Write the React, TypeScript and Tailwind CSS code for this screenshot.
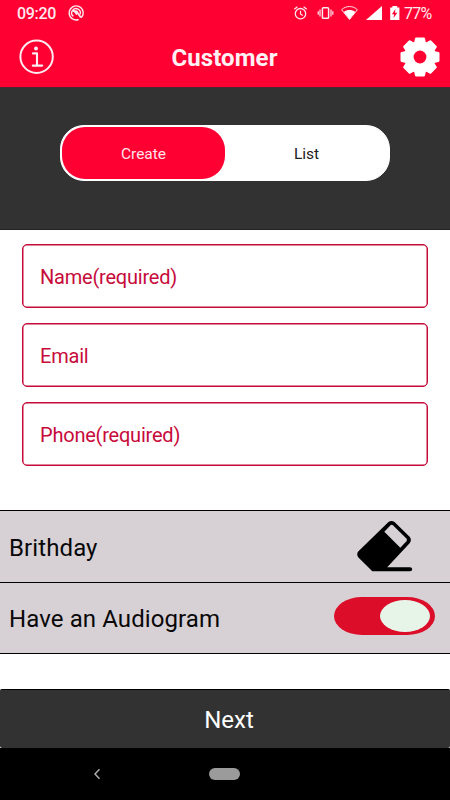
import { useState } from 'react';

const FONT = "font-['Roboto','Liberation_Sans',sans-serif]";

function StatusBar() {
  return (
    <div className="flex h-[27px] items-center text-[#ffe9ee]">
      <span className="ml-[17px] w-[51px] text-[16px] font-medium leading-none tracking-[-0.3px]">09:20</span>
      <svg className="mb-px h-4 w-4" viewBox="0 0 16 16" fill="none" stroke="currentColor">
        <path d="M13.2 12.8A7 7 0 1 0 10.6 14.5" strokeWidth="1.4" />
        <path d="M5.4 11.4A4.3 4.3 0 1 1 12 9.6" strokeWidth="1.4" />
        <path d="M4.6 5.8L8.6 6.4L12.8 12.4" strokeWidth="1.7" />
        <path d="M5 5.6L9.5 6.4L8.6 10Z" fill="currentColor" strokeWidth="0.6" />
      </svg>

      {/* Alarm, vibrate, wifi, signal, battery */}
      <svg className="ml-auto h-[27px] w-[108px]" viewBox="0 0 108 27" fill="none" stroke="currentColor">
        <circle cx="7.5" cy="13.7" r="5.2" strokeWidth="1.3" />
        <path d="M7.5 10.7V14L9.7 15.4M1.3 9.2L4.4 6.7M13.7 9.2L10.6 6.7" strokeWidth="1.2" />
        <rect x="29.4" y="7.7" width="6.2" height="10.6" rx="0.8" strokeWidth="1.5" />
        <path d="M27 9.5V16.5M38 9.5V16.5M25.2 11.3V14.7M39.8 11.3V14.7" strokeWidth="1.2" />
        <path d="M48.6 9.7C53 5.5 60 5.5 64.4 9.7L56.5 19.5Z" fill="#ff0033" strokeWidth="1" />
        <path d="M50.8 11.9C54 9.4 59 9.4 62.2 11.9L56.5 19.3Z" fill="white" stroke="none" />
        <path d="M89 6V20H73Z" fill="white" stroke="none" />
        <path d="M99.4 7.4H97.2V20H106.4V7.4H104.2V6H99.4Z" fill="white" stroke="none" />
        <path d="M102.4 9L98.9 14.2H101.1L100.5 18L104.3 12.7H102Z" fill="#ff0033" stroke="none" />
      </svg>
      <span className="ml-[3px] mr-[17px] w-[29px] whitespace-nowrap pt-px text-[16px] leading-none tracking-[-0.7px]">77%</span>
    </div>
  );
}

function InfoIcon() {
  return (
    <svg className="h-9 w-9" viewBox="0 0 36 36" fill="none" stroke="#ffedf1">
      <circle cx="17.6" cy="17.7" r="16.2" strokeWidth="2" />
      <circle cx="17" cy="9.6" r="2" fill="#ffedf1" stroke="none" />
      <path d="M14 14.4H18V26.6M13.8 26.6H23.2" strokeWidth="2.1" strokeLinecap="round" strokeLinejoin="round" />
    </svg>
  );
}

const TEETH = [0, 45, 90, 135, 180, 225, 270, 315];

function GearIcon() {
  return (
    <svg className="h-10 w-10" viewBox="-20 -20 40 40">
      <g fill="white">
        <circle r="15.8" />
        {TEETH.map((angle) => (
          <path
            key={angle}
            transform={`rotate(${angle})`}
            d="M-6 -14L-5 -18.5Q-4.8 -19.5 -3.8 -19.5H3.8Q4.8 -19.5 5 -18.5L6 -14Z"
          />
        ))}
      </g>
      <circle r="6.4" fill="#ff0033" />
    </svg>
  );
}

function EraserIcon() {
  return (
    <svg className="h-[54px] w-[58px]" viewBox="0 0 58 54">
      <path d="M32.2 2.2Q35.5 -0.4 38.8 2.2L53.6 16.8Q56.2 20 53.6 23.2L31.2 47.2H54Q56.2 47.4 56.2 49.3Q56.2 51.2 54 51.3H16.3L2.2 37.3Q0.2 34.2 2.2 31.5Z" fill="black" />
      <path d="M28.3 11.8L34.5 5.2Q35.7 4.2 36.9 5.2L50.4 18.5Q51.5 19.8 50.4 21.2L44.3 27.8Z" fill="#d7d1d6" />
    </svg>
  );
}

const fields = ['Name(required)', 'Email', 'Phone(required)'];

export default function App() {
  const [tab, setTab] = useState('create');
  const [audiogram, setAudiogram] = useState(true);

  return (
    <div className={`flex h-[800px] w-[450px] flex-col overflow-hidden bg-white ${FONT}`}>
      <header className="h-[88px] shrink-0 border-b border-[#4b2634] bg-[#ff0033]">
        <StatusBar />
        <div className="flex h-[60px] items-center justify-between pl-[19px] pr-[10px]">
          <button aria-label="Information"><InfoIcon /></button>
          <h1 className="mr-[6px] pt-[2px] text-[24px] font-bold leading-none tracking-[0.1px] text-[#fff0f3]">Customer</h1>
          <button aria-label="Settings"><GearIcon /></button>
        </div>
      </header>

      {/* Create / List switcher */}
      <div className="flex h-[142px] shrink-0 justify-center border-b border-[#232323] bg-[#323232] pt-[37px]">
        <div className="flex h-14 w-[330px] rounded-[24px] border border-white bg-white p-px text-[15.5px] tracking-[-0.05px]">
          <button
            onClick={() => setTab('create')}
            className={`w-[163px] rounded-[23px] pt-[3px] ${tab === 'create' ? 'bg-[#ff0033] text-[#ffe4ea]' : 'text-[#202020]'}`}
          >
            Create
          </button>
          <button
            onClick={() => setTab('list')}
            className={`flex-1 rounded-[23px] pt-[3px] ${tab === 'list' ? 'bg-[#ff0033] text-[#ffe4ea]' : 'text-[#202020]'}`}
          >
            List
          </button>
        </div>
      </div>

      <div className="flex shrink-0 flex-col gap-[15px] px-[22px] pt-[14px]">
        {fields.map((label) => (
          <div key={label} className="flex h-16 items-center rounded-[5px] border border-[#c60b3a] pl-[17px] pt-px text-[20px] tracking-[-0.22px] text-[#c70b3b] shadow-[inset_0_0_0_0.5px_#c60b3a]">
            {label}
          </div>
        ))}
      </div>

      <div className="mt-[44px] shrink-0 border-t-[1.5px] border-black bg-[#d7d1d6] text-[24px] tracking-[0.1px] text-[#080808]">
        <div className="flex h-[72px] items-center justify-between border-b-[1.5px] border-black pl-[9px] pr-[36px]">
          <span className="pt-[2px]">Brithday</span>
          <EraserIcon />
        </div>
        <div className="flex h-[71px] items-center justify-between border-b-[1.5px] border-black pl-[9px] pr-[15px]">
          <span className="pt-[2px]">Have an Audiogram</span>
          <button
            role="switch"
            aria-checked={audiogram}
            aria-label="Have an Audiogram"
            onClick={() => setAudiogram(!audiogram)}
            className={`mb-[4px] flex h-[38px] w-[101px] items-center rounded-[28px/19px] px-[5px] ${audiogram ? 'justify-end bg-[#dc0d28]' : 'justify-start bg-[#8b8589]'}`}
          >
            <span className="h-8 w-[50px] rounded-[50%] bg-[#e7f5e9]" />
          </button>
        </div>
      </div>

      <button className="mt-[35px] h-[59px] shrink-0 rounded-[2px] border-t border-black bg-[#323232] pl-[8px] pt-px text-[24px] text-white">
        Next
      </button>

      {/* System navigation */}
      <div className="flex flex-1 items-center bg-black">
        <svg className="ml-[93px] h-3 w-2" viewBox="0 0 8 12" fill="none" stroke="#aaa" strokeWidth="1.5">
          <path d="M6.5 1.2L2 6L6.5 10.8" />
        </svg>
        <span className="ml-[108px] h-3 w-[31px] rounded-full bg-[#9b9b9b]" />
      </div>
    </div>
  );
}
